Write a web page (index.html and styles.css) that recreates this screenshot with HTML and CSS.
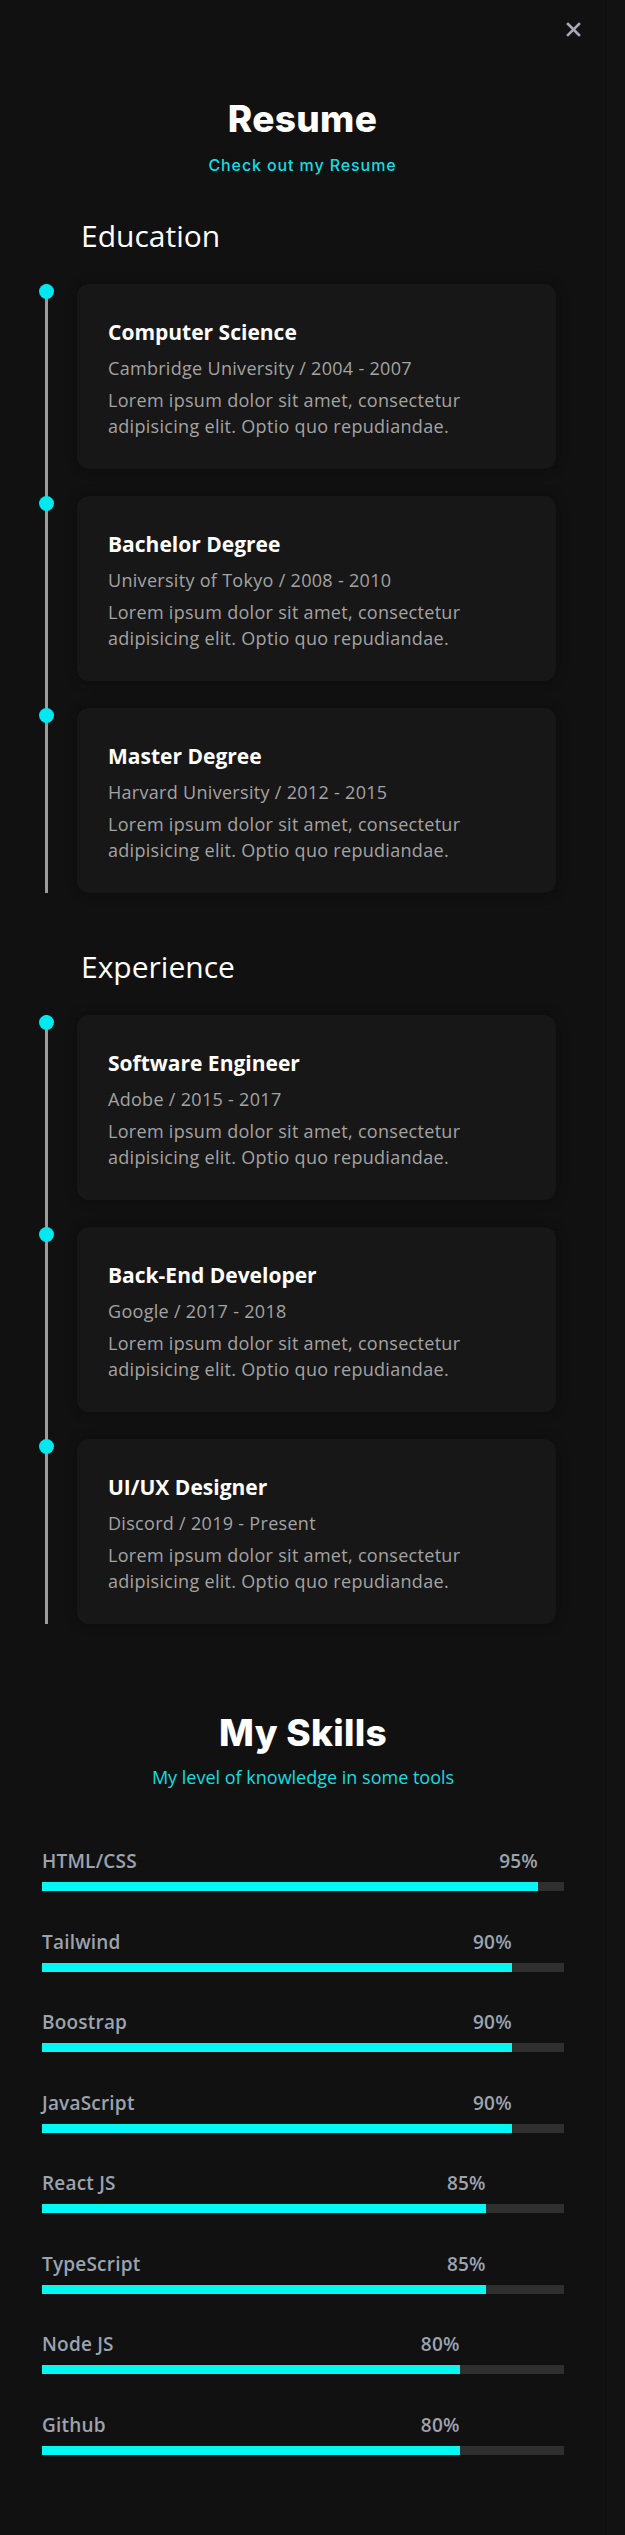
FILE: index.html
```html
<!DOCTYPE html>
<html lang="en">
<head>
<meta charset="utf-8">
<title>Resume</title>
<link rel="stylesheet" href="styles.css">
</head>
<body>
<div class="page">
  <main class="main">
    <div class="topbar">
      <button class="close" aria-label="Close">
        <svg width="15" height="15" viewBox="0 0 15 15"><path d="M2 2 L13 13 M13 2 L2 13" stroke="#a3aab8" stroke-width="2.6" stroke-linecap="square" fill="none"/></svg>
      </button>
    </div>

    <header class="head">
      <h1 class="title">Resume</h1>
      <p class="tagline">Check out my Resume</p>
    </header>

    <section class="block block-edu">
      <h2 class="block-title">Education</h2>
      <ol class="timeline">
        <li class="entry"><span class="dot"></span>
          <div class="card">
            <h3 class="card-title">Computer Science</h3>
            <p class="card-sub">Cambridge University / 2004 - 2007</p>
            <p class="card-text">Lorem ipsum dolor sit amet, consectetur adipisicing elit. Optio quo repudiandae.</p>
          </div>
        </li>
        <li class="entry"><span class="dot"></span>
          <div class="card">
            <h3 class="card-title">Bachelor Degree</h3>
            <p class="card-sub">University of Tokyo / 2008 - 2010</p>
            <p class="card-text">Lorem ipsum dolor sit amet, consectetur adipisicing elit. Optio quo repudiandae.</p>
          </div>
        </li>
        <li class="entry"><span class="dot"></span>
          <div class="card">
            <h3 class="card-title">Master Degree</h3>
            <p class="card-sub">Harvard University / 2012 - 2015</p>
            <p class="card-text">Lorem ipsum dolor sit amet, consectetur adipisicing elit. Optio quo repudiandae.</p>
          </div>
        </li>
      </ol>
    </section>

    <section class="block block-exp">
      <h2 class="block-title">Experience</h2>
      <ol class="timeline">
        <li class="entry"><span class="dot"></span>
          <div class="card">
            <h3 class="card-title">Software Engineer</h3>
            <p class="card-sub">Adobe / 2015 - 2017</p>
            <p class="card-text">Lorem ipsum dolor sit amet, consectetur adipisicing elit. Optio quo repudiandae.</p>
          </div>
        </li>
        <li class="entry"><span class="dot"></span>
          <div class="card">
            <h3 class="card-title">Back-End Developer</h3>
            <p class="card-sub">Google / 2017 - 2018</p>
            <p class="card-text">Lorem ipsum dolor sit amet, consectetur adipisicing elit. Optio quo repudiandae.</p>
          </div>
        </li>
        <li class="entry"><span class="dot"></span>
          <div class="card">
            <h3 class="card-title">UI/UX Designer</h3>
            <p class="card-sub">Discord / 2019 - Present</p>
            <p class="card-text">Lorem ipsum dolor sit amet, consectetur adipisicing elit. Optio quo repudiandae.</p>
          </div>
        </li>
      </ol>
    </section>

    <section class="skills">
      <h1 class="title">My Skills</h1>
      <p class="skills-tagline">My level of knowledge in some tools</p>
      <div class="skill-list">
        <div class="skill">
          <div class="skill-head" style="width:95%"><span>HTML/CSS</span><span>95%</span></div>
          <div class="track"><div class="fill" style="width:95%"></div></div>
        </div>
        <div class="skill">
          <div class="skill-head" style="width:90%"><span>Tailwind</span><span>90%</span></div>
          <div class="track"><div class="fill" style="width:90%"></div></div>
        </div>
        <div class="skill">
          <div class="skill-head" style="width:90%"><span>Boostrap</span><span>90%</span></div>
          <div class="track"><div class="fill" style="width:90%"></div></div>
        </div>
        <div class="skill">
          <div class="skill-head" style="width:90%"><span>JavaScript</span><span>90%</span></div>
          <div class="track"><div class="fill" style="width:90%"></div></div>
        </div>
        <div class="skill">
          <div class="skill-head" style="width:85%"><span>React JS</span><span>85%</span></div>
          <div class="track"><div class="fill" style="width:85%"></div></div>
        </div>
        <div class="skill">
          <div class="skill-head" style="width:85%"><span>TypeScript</span><span>85%</span></div>
          <div class="track"><div class="fill" style="width:85%"></div></div>
        </div>
        <div class="skill">
          <div class="skill-head" style="width:80%"><span>Node JS</span><span>80%</span></div>
          <div class="track"><div class="fill" style="width:80%"></div></div>
        </div>
        <div class="skill">
          <div class="skill-head" style="width:80%"><span>Github</span><span>80%</span></div>
          <div class="track"><div class="fill" style="width:80%"></div></div>
        </div>
      </div>
    </section>
  </main>
  <div class="rail"></div>
</div>
</body>
</html>
```

FILE: styles.css
```css
* { box-sizing: border-box; }
html, body { margin: 0; padding: 0; }
body {
  background: #111111;
  color: #ffffff;
  font-family: "Open Sans", "Noto Sans", sans-serif;
}
.page {
  display: flex;
  min-height: 2535px;
}
.main {
  flex: 1;
  min-width: 0;
  padding-bottom: 79px;
}
.rail {
  width: 20px;
  flex: none;
  background: #121212;
  border-left: 1px solid #0e0e0e;
}

.topbar {
  display: flex;
  justify-content: flex-end;
  padding: 22px 24px 0 0;
}
.close {
  display: block;
  width: 15px;
  height: 15px;
  padding: 0;
  border: 0;
  background: none;
  cursor: pointer;
}
.close svg { display: block; }

.head { text-align: center; margin-top: 62px; }
.title {
  margin: 0;
  font-family: Inter, "Open Sans", sans-serif;
  font-weight: 800;
  font-size: 37px;
  line-height: 40px;
  letter-spacing: 0.3px;
  color: #ffffff;
  text-align: center;
}
.tagline {
  margin: 14px 0 0;
  font-family: Inter, "Open Sans", sans-serif;
  font-weight: 500;
  font-size: 16px;
  line-height: 24px;
  letter-spacing: 0.9px;
  color: #12dde3;
}

.block { padding: 0 41px 0 42px; }
.block-edu { margin-top: 41px; }
.block-exp { margin-top: 56px; }
.block-title {
  margin: 0 0 30px;
  padding-left: 39px;
  font-weight: 400;
  font-size: 30px;
  line-height: 36px;
  color: #ffffff;
}

.timeline {
  list-style: none;
  margin: 0 8px 0 3px;
  padding: 0;
  border-left: 3px solid #9c9c9c;
}
.entry {
  position: relative;
  padding-left: 29px;
}
.entry + .entry { margin-top: 27px; }
.dot {
  position: absolute;
  left: -9px;
  top: 0;
  width: 15px;
  height: 15px;
  border-radius: 50%;
  background: #00e8f0;
}
.card {
  background: #171717;
  border-radius: 12px;
  padding: 34px 36px 30px 31px;
  box-shadow: 0 0 12px rgba(0, 0, 0, 0.35);
}
.card-title {
  margin: 0 0 10px;
  font-weight: 700;
  font-size: 21px;
  line-height: 28px;
  color: #ffffff;
}
.card-sub {
  margin: 0 0 7px;
  font-size: 18px;
  line-height: 24px;
  letter-spacing: 0.3px;
  color: #a3a3a3;
}
.card-text {
  margin: 0;
  font-size: 18px;
  line-height: 26px;
  letter-spacing: 0.3px;
  color: #a3a3a3;
}

.skills { margin-top: 89px; padding: 0 41px 0 42px; }
.skills-tagline {
  margin: 12px 0 0;
  text-align: center;
  font-weight: 500;
  font-size: 18px;
  line-height: 24px;
  color: #12dde3;
}
.skill-list {
  margin-top: 58px;
  display: flex;
  flex-direction: column;
  gap: 36.5px;
}
.skill-head {
  display: flex;
  justify-content: space-between;
  font-weight: 600;
  font-size: 19px;
  line-height: 28px;
  letter-spacing: 0.2px;
  color: #9ca3af;
  margin-bottom: 7px;
}
.track {
  height: 9px;
  background: #2f2f2f;
}
.fill {
  height: 100%;
  background: #06f6f4;
}
```
